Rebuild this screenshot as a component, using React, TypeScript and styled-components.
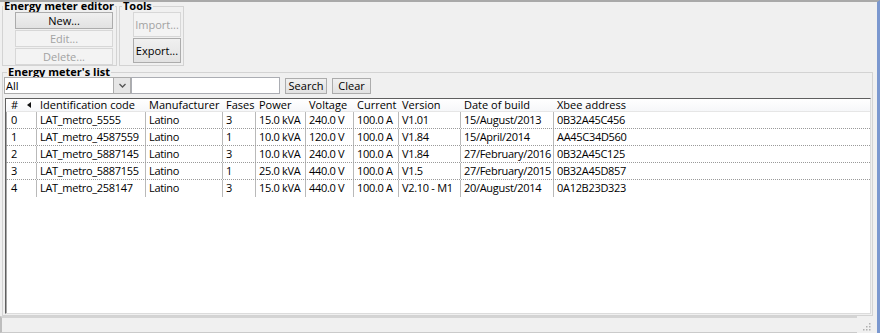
import React from "react";
import styled, { createGlobalStyle } from "styled-components";

const GlobalStyle = createGlobalStyle`
  html, body { margin: 0; padding: 0; background: #ffffff; }
  body { font-family: "Open Sans", "Noto Sans", sans-serif; font-size: 11px; color: #000; }
  * { box-sizing: border-box; }
`;

const Window = styled.div`
  width: 880px;
  height: 333px;
  background: #f0f0f0;
  border-top: 2px solid #a9a9a9;
  border-right: 3px solid #7b98cf;
  display: flex;
  flex-direction: column;
`;

const TopRow = styled.div`
  display: flex;
  gap: 2px;
  height: 64px;
  padding-left: 2px;
  flex-shrink: 0;
`;

const Group = styled.fieldset<{ $width: number }>`
  margin: 0;
  padding: 0;
  border: 1px solid #d3d3d3;
  min-width: 0;
  width: ${(p) => p.$width}px;
`;

const Legend = styled.legend<{ $offset: number; $lh: number }>`
  font-weight: 700;
  font-size: 11px;
  line-height: ${(p) => p.$lh}px;
  padding: 0 1px;
  margin-left: ${(p) => p.$offset}px;
  white-space: nowrap;
  color: #000;
`;

const ButtonStack = styled.div<{ $padLeft: number }>`
  display: flex;
  flex-direction: column;
  gap: 1px;
  padding: 2px 2px 0 ${(p) => p.$padLeft}px;
`;

const Button = styled.button<{ $w: number; $h: number }>`
  width: ${(p) => p.$w}px;
  height: ${(p) => p.$h}px;
  margin: 0;
  padding: 0;
  font-family: inherit;
  font-size: 11px;
  line-height: 1;
  color: #000;
  background: linear-gradient(#f0f0f0, #e2e2e2);
  border: 1px solid #acacac;
  border-radius: 0;
  flex-shrink: 0;
  &:disabled {
    color: #a2a2a2;
    background: #f3f3f3;
    border-color: #d7d7d7;
  }
`;

const ListGroup = styled.fieldset`
  margin: 0 4px 0 2px;
  padding: 0 2px 1px 0;
  border: 1px solid #d3d3d3;
  min-width: 0;
  flex: 1;
  display: flex;
  flex-direction: column;
`;

const FilterRow = styled.div`
  display: flex;
  align-items: center;
  margin-top: -1px;
  padding-left: 1px;
  height: 17px;
  flex-shrink: 0;
`;

const Combo = styled.div`
  display: flex;
  width: 127px;
  height: 17px;
  border: 1px solid #acacac;
  background: #fff;
`;

const ComboValue = styled.div`
  flex: 1;
  padding-left: 1px;
  line-height: 15px;
`;

const ComboArrow = styled.div`
  width: 17px;
  border-left: 1px solid #acacac;
  background: #e6e6e6;
  display: flex;
  align-items: center;
  justify-content: center;
`;

const TextField = styled.div`
  width: 149px;
  height: 17px;
  border: 1px solid #abadb3;
  background: #fff;
`;

const Actions = styled.div`
  display: flex;
  gap: 5px;
  margin-left: 5px;
`;

const Table = styled.div`
  margin: 4px 0 0 2px;
  width: 866px;
  height: 216px;
  background: #fff;
  border: 1px solid;
  border-color: #5f5f5f #dcdcdc #dcdcdc #5f5f5f;
  box-shadow: inset 1px 0 0 #a8a8a8;
  display: flex;
  flex-direction: column;
  flex-shrink: 0;
`;

const cols = "31px 109px 77px 33px 50px 48px 45px 62px 93px 1fr";

const HeaderRow = styled.div`
  display: grid;
  grid-template-columns: ${cols};
  height: 13px;
  border-bottom: 1px solid #e6e6e6;
  background: linear-gradient(#ffffff, #f6f7f9);
`;

const HeaderCell = styled.div`
  padding-left: 3px;
  line-height: 12px;
  white-space: nowrap;
  display: flex;
  align-items: center;
  gap: 9px;
  &:first-child { padding-left: 5px; }
`;

const DataRow = styled.div<{ $last: boolean }>`
  display: grid;
  grid-template-columns: ${cols};
  height: 17px;
  border-bottom: ${(p) => (p.$last ? "none" : "1px dotted #9a9a9a")};
`;

const Cell = styled.div`
  padding-left: 3px;
  line-height: 16px;
  white-space: nowrap;
  overflow: hidden;
  letter-spacing: -0.3px;
  border-right: 1px solid #b9b9b9;
  &:first-child { padding-left: 5px; }
  &:last-child { border-right: none; }
`;

const StatusBar = styled.div`
  display: flex;
  height: 17px;
  flex-shrink: 0;
`;

const StatusPanel = styled.div`
  flex: 1;
  border-top: 2px solid #d4d4d4;
  border-bottom: 1px solid #cacaca;
  border-left: 2px solid #bdbdbd;
`;

const Grip = styled.div`
  width: 20px;
  display: flex;
  align-items: flex-end;
  padding: 0 0 2px 5px;
`;

const rows = [
  ["0", "LAT_metro_5555", "Latino", "3", "15.0 kVA", "240.0 V", "100.0 A", "V1.01", "15/August/2013", "0B32A45C456"],
  ["1", "LAT_metro_4587559", "Latino", "1", "10.0 kVA", "120.0 V", "100.0 A", "V1.84", "15/April/2014", "AA45C34D560"],
  ["2", "LAT_metro_5887145", "Latino", "3", "10.0 kVA", "240.0 V", "100.0 A", "V1.84", "27/February/2016", "0B32A45C125"],
  ["3", "LAT_metro_5887155", "Latino", "1", "25.0 kVA", "440.0 V", "100.0 A", "V1.5", "27/February/2015", "0B32A45D857"],
  ["4", "LAT_metro_258147", "Latino", "3", "15.0 kVA", "440.0 V", "100.0 A", "V2.10 - M1", "20/August/2014", "0A12B23D323"],
];

const headers = ["Identification code", "Manufacturer", "Fases", "Power", "Voltage", "Current", "Version", "Date of build", "Xbee address"];

export default function App() {
  return (
    <>
      <GlobalStyle />
      <Window>
        <TopRow>
          <Group $width={115}>
            <Legend $offset={0} $lh={8}>Energy meter editor</Legend>
            <ButtonStack $padLeft={12}>
              <Button $w={98} $h={17}>New...</Button>
              <Button $w={98} $h={17} disabled>Edit...</Button>
              <Button $w={98} $h={17} disabled>Delete...</Button>
            </ButtonStack>
          </Group>
          <Group $width={65}>
            <Legend $offset={2} $lh={8}>Tools</Legend>
            <ButtonStack $padLeft={13}>
              <Button $w={48} $h={25} disabled>Import...</Button>
              <Button $w={48} $h={25}>Export...</Button>
            </ButtonStack>
          </Group>
        </TopRow>
        <ListGroup>
          <Legend $offset={4} $lh={12}>Energy meter's list</Legend>
          <FilterRow>
            <Combo>
              <ComboValue>All</ComboValue>
              <ComboArrow>
                <svg width="7" height="5" viewBox="0 0 7 5">
                  <polyline points="0.5,1 3.5,4 6.5,1" fill="none" stroke="#555" strokeWidth="1.3" />
                </svg>
              </ComboArrow>
            </Combo>
            <TextField />
            <Actions>
              <Button $w={42} $h={16}>Search</Button>
              <Button $w={39} $h={16}>Clear</Button>
            </Actions>
          </FilterRow>
          <Table>
            <HeaderRow>
              <HeaderCell>
                <span>#</span>
                <svg width="4" height="6" viewBox="0 0 4 6">
                  <polygon points="4,0 4,6 0,3" fill="#111" />
                </svg>
              </HeaderCell>
              {headers.map((h) => (
                <HeaderCell key={h}>{h}</HeaderCell>
              ))}
            </HeaderRow>
            {rows.map((r, i) => (
              <DataRow key={r[0]} $last={i === rows.length - 1}>
                {r.map((c, j) => (
                  <Cell key={j}>{c}</Cell>
                ))}
              </DataRow>
            ))}
          </Table>
        </ListGroup>
        <StatusBar>
          <StatusPanel />
          <Grip>
            <svg width="9" height="9" viewBox="0 0 9 9">
              {[
                [7, 1], [7, 4], [4, 4], [7, 7], [4, 7], [1, 7],
              ].map(([x, y], k) => (
                <rect key={k} x={x} y={y} width="1.5" height="1.5" fill="#b0b0b0" />
              ))}
            </svg>
          </Grip>
        </StatusBar>
      </Window>
    </>
  );
}
